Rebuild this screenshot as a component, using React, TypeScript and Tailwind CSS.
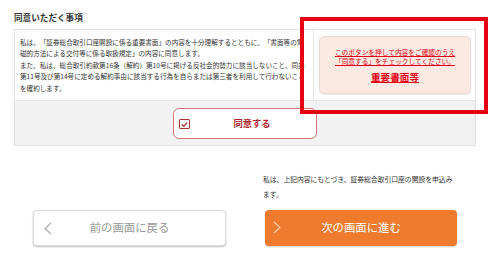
import React from 'react';

const jp = "font-['Noto_Sans_CJK_JP','Noto_Sans',sans-serif]";

const ChevronLeft: React.FC<{ color: string }> = ({ color }) => (
    <svg width="8" height="13" viewBox="0 0 8 13" fill="none">
        <polyline points="7,1 1,6.5 7,12" stroke={color} strokeWidth="1.1" />
    </svg>
);

const ChevronRight: React.FC<{ color: string }> = ({ color }) => (
    <svg width="8" height="13" viewBox="0 0 8 13" fill="none">
        <polyline points="1,1 7,6.5 1,12" stroke={color} strokeWidth="1.1" />
    </svg>
);

/**
 * Consent step of the securities account opening form.
 */
const App: React.FC = () => {
    return (
        <div className={`relative w-[500px] h-[270px] bg-white overflow-hidden [text-spacing-trim:space-all] ${jp}`}>
            <div className="px-[14px] pt-[12px]">
                <h2 className="text-[8.6px] leading-[11px] font-bold text-[#333]">同意いただく事項</h2>

                {/* consent box */}
                <div className="mt-[6px] w-[462px] border border-[#e2e2e2]">
                    <div className="grid grid-cols-[298px_1fr] bg-white border-b border-[#e8e8e8]">
                        <div className="pl-[5px] pr-[6px] pt-[7px] pb-[4px] text-[6.6px] leading-[11.4px] text-[#333]">
                            <p>私は、「証券総合取引口座開設に係る重要書面」の内容を十分理解するとともに、「書面等の電磁的方法による交付等に係る取扱規定」の内容に同意します。</p>
                            <p>また、私は、総合取引約款第16条（解約）第10号に掲げる反社会的勢力に該当しないこと、同条第11号及び第14号に定める解約事由に該当する行為を自らまたは第三者を利用して行わないことを確約します。</p>
                        </div>
                        <div className="border-l border-[#e8e8e8] pl-[5px] pr-[4px] py-[6px]">
                            <div className="h-[58px] rounded-[5px] bg-[#fce9e2] border border-[#ead8d2] shadow-[0_1px_1px_rgba(0,0,0,0.08)] flex flex-col items-center justify-center text-[#e60012]">
                                <p className="text-[6.7px] leading-[9.5px] underline text-center">
                                    このボタンを押して内容をご確認のうえ<br />「同意する」をチェックしてください。
                                </p>
                                <p className="mt-[4px] text-[9.6px] leading-[12px] font-bold underline">重要書面等</p>
                            </div>
                        </div>
                    </div>
                    <div className="h-[44px] bg-[#f2f2f2] flex items-center justify-center">
                        <button className="relative w-[144px] h-[31px] mt-[1px] rounded-[6px] bg-white border border-[#d8747c] flex items-center justify-center">
                            <span className="absolute left-[5px] top-[10px] w-[11px] h-[10px] rounded-[1px] border-[1.5px] border-[#a8323a] flex items-center justify-center">
                                <svg width="7" height="5" viewBox="0 0 7 5" fill="none">
                                    <polyline points="0.8,2.4 2.8,4.2 6.2,0.8" stroke="#a8323a" strokeWidth="1.3" />
                                </svg>
                            </span>
                            <span className="text-[9.3px] font-bold text-[#b0262e] ml-[14px]">同意する</span>
                        </button>
                    </div>
                </div>
            </div>

            {/* navigation */}
            <div className="ml-[33px] mt-[26px] w-[424px] grid grid-cols-[193px_192px] gap-x-[39px]">
                <div />
                <p className="-ml-[2px] text-[6.8px] leading-[15px] text-[#333]">私は、上記内容にもとづき、証券総合取引口座の開設を申込みます。</p>
                <button className="mt-[8px] relative h-[36px] rounded-[4px] bg-white border border-[#dcdcdc] shadow-[0_1px_2px_rgba(0,0,0,0.25)] flex items-center justify-center">
                    <span className="absolute left-[10px] top-[11px]"><ChevronLeft color="#aaa" /></span>
                    <span className="text-[11.4px] text-[#999]">前の画面に戻る</span>
                </button>
                <button className="mt-[8px] relative h-[36px] rounded-[4px] bg-[#ee7b2e] shadow-[0_1px_2px_rgba(0,0,0,0.2)] flex items-center justify-center">
                    <span className="absolute left-[8px] top-[11px]"><ChevronRight color="#fbd3b5" /></span>
                    <span className="text-[11.4px] text-white">次の画面に進む</span>
                </button>
            </div>

            {/* annotation frame */}
            <div className="absolute left-[300px] top-[17px] w-[188px] h-[97px] border-[4px] border-[#e60012]" />
        </div>
    );
};

export default App;
